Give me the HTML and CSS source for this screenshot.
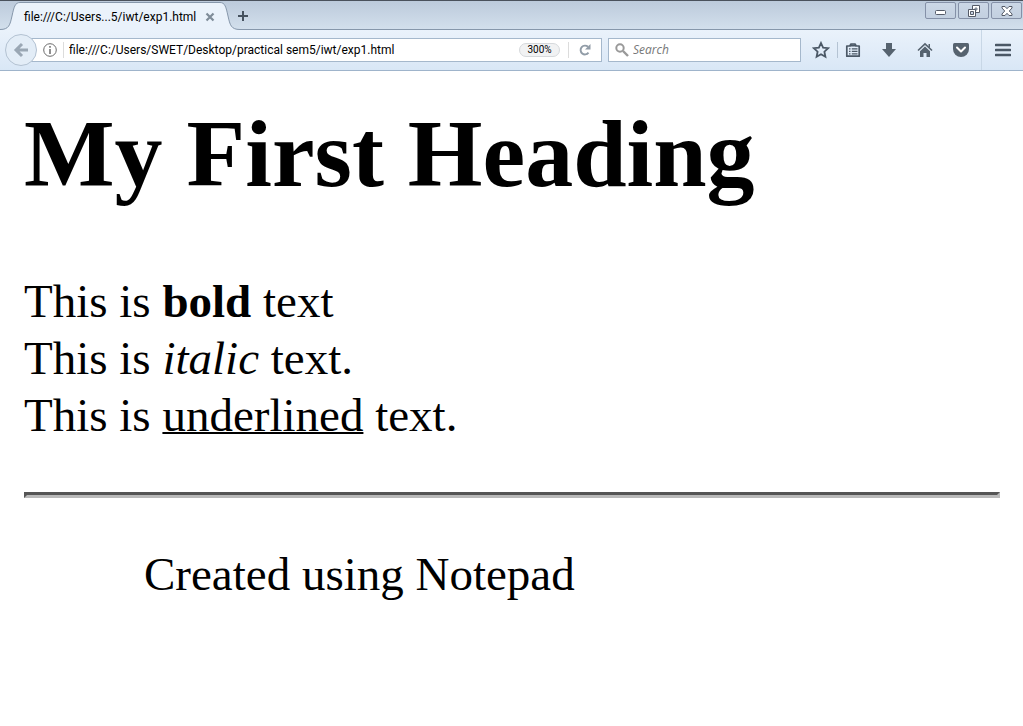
FILE: index.html
```html
<!DOCTYPE html>
<html lang="en">
<head>
<meta charset="utf-8">
<title>exp1.html</title>
<link rel="stylesheet" href="styles.css">
</head>
<body>
<header class="browser">
  <div class="tabbar">
    <div class="tab">
      <svg class="cap" width="20" height="28" viewBox="0 0 20 28"><path d="M0 28C9 28 10 23 12 14S15 .5 20 .5V28Z" fill="#eaf2fb"/><path d="M0 27.5C9 27.5 10 23 12 14S15 .5 20 .5" fill="none" stroke="#8697ab"/></svg>
      <div class="tab-body">
        <button class="tab-title" type="button">file:///C:/Users...5/iwt/exp1.html</button>
        <button class="tab-close" type="button" aria-label="Close tab"><svg width="10" height="10" viewBox="0 0 10 10"><path d="M1.5 1.5l7 7M8.5 1.5l-7 7" stroke="#7f8c99" stroke-width="2.2"/></svg></button>
      </div>
      <svg class="cap" width="20" height="28" viewBox="0 0 20 28"><path d="M20 28C11 28 10 23 8 14S5 .5 0 .5V28Z" fill="#eaf2fb"/><path d="M20 27.5C11 27.5 10 23 8 14S5 .5 0 .5" fill="none" stroke="#8697ab"/></svg>
    </div>
    <div class="tab-rest">
      <button class="new-tab" type="button" aria-label="New tab"><svg width="12" height="12" viewBox="0 0 12 12"><path d="M6 1v10M1 6h10" stroke="#46525f" stroke-width="2"/></svg></button>
      <div class="window-controls">
        <button type="button" aria-label="Minimize"><svg width="14" height="12" viewBox="0 0 14 12"><rect x="1.500" y="5.500" width="10" height="4" rx="1" fill="#fff" stroke="#555b68"/></svg></button>
        <button type="button" aria-label="Restore"><svg width="14" height="12" viewBox="0 0 14 12"><path d="M5.500 .5h7v7h-7z" fill="#fff" stroke="#555b68"/><path d="M8 3h2v2H8z" fill="#c8d3e3" stroke="#555b68" stroke-width=".7"/><path d="M1.500 4.500h7v7h-7z" fill="#fff" stroke="#555b68"/><path d="M3.500 6.500h3v3h-3z" fill="#c8d3e3" stroke="#555b68"/></svg></button>
        <button type="button" aria-label="Close"><svg width="14" height="12" viewBox="0 0 14 12"><path d="M2 1.500h3l2 2.200 2-2.200h3v1.500L9.300 6 12 9v1.500H9L7 8.300 5 10.500H2V9l2.700-3L2 3z" fill="#fff" stroke="#555b68"/></svg></button>
      </div>
    </div>
  </div>
  <nav class="toolbar">
    <button class="back" type="button" aria-label="Back"><svg width="16" height="16" viewBox="0 0 16 16"><path d="M9 2L3 8l6 6M3.500 8H15" fill="none" stroke="#9aa7b4" stroke-width="3"/></svg></button>
    <div class="urlbar">
      <button class="plain info" type="button" aria-label="Site information"><svg width="14" height="14" viewBox="0 0 14 14"><circle cx="7" cy="7" r="6.300" fill="none" stroke="#6b6b6b"/><path d="M7 6v5M7 3v1.700" stroke="#6b6b6b" stroke-width="1.500"/></svg></button>
      <input class="url" type="text" aria-label="Address" value="file:///C:/Users/SWET/Desktop/practical sem5/iwt/exp1.html">
      <button class="zoom" type="button">300%</button>
      <button class="plain reload" type="button" aria-label="Reload"><svg width="12" height="12" viewBox="0 0 12 12"><path d="M9.500 8.700A4.400 4.400 0 1 1 9 2.800" fill="none" stroke="#919ca7" stroke-width="1.900"/><path d="M11.500 0v5.500H6z" fill="#919ca7"/></svg></button>
    </div>
    <label class="search">
      <svg width="14" height="14" viewBox="0 0 14 14"><circle cx="5" cy="5" r="3.700" fill="none" stroke="#999" stroke-width="2"/><path d="M8 8l5 5" stroke="#999" stroke-width="2.400"/></svg>
      <input type="text" placeholder="Search" aria-label="Search">
    </label>
    <div class="tools">
      <button class="plain tool-star" type="button" aria-label="Bookmark"><svg width="18" height="18" viewBox="0 0 18 18"><path d="M9 2l2.100 4.700 5 .5-3.700 3.500 1 5.100L9 13.200l-4.400 2.600 1-5.100L1.900 7.200l5-.5z" fill="none" stroke="#4b5866" stroke-width="1.800"/></svg></button>
      <button class="plain tool-list" type="button" aria-label="Bookmarks list"><svg width="16" height="16" viewBox="0 0 16 16"><path d="M1.800 4h3L6 2h4l1.200 2h3v10.200H1.800z" fill="none" stroke="#4b5866" stroke-width="1.700" stroke-linejoin="round"/><path d="M5 2.500h6v2H5z" fill="#4b5866"/><path d="M4 6.800h1.500M6.800 6.800h5.700M4 9.300h1.500M6.800 9.300h5.700M4 11.800h1.500M6.800 11.800h5.700" stroke="#4b5866" stroke-width="1.200"/></svg></button>
      <button class="plain" type="button" aria-label="Downloads"><svg width="16" height="16" viewBox="0 0 16 16"><path d="M5 1h6v6h4l-7 8-7-8h4z" fill="#56636f"/></svg></button>
      <button class="plain" type="button" aria-label="Home"><svg width="16" height="16" viewBox="0 0 16 16"><path d="M1 8.500L8 1.800l7 6.700" fill="none" stroke="#56636f" stroke-width="1.600"/><path d="M8 4.500l5 4.700V15H9.500v-4h-3v4H3V9.200zM11.500 2H13v4l-1.500-1.500z" fill="#56636f"/></svg></button>
      <button class="plain" type="button" aria-label="Pocket"><svg width="18" height="16" viewBox="0 0 18 16"><path d="M2.500 1h13Q17 1 17 2.500V7a8 8 0 0 1-16 0V2.500Q1 1 2.500 1z" fill="#56636f"/><path d="M5 5.500l4 4 4-4" fill="none" stroke="#fff" stroke-width="2" stroke-linecap="round" stroke-linejoin="round"/></svg></button>
      <button class="plain tool-menu" type="button" aria-label="Menu"><svg width="16" height="14" viewBox="0 0 16 14"><path d="M1 2h14M1 7h14M1 12h14" stroke="#4b5866" stroke-width="2.600" stroke-linecap="round"/></svg></button>
    </div>
  </nav>
</header>
<main class="document">
  <h1>My First Heading</h1>
  <p>This is <b>bold</b> text<br>This is <i>italic</i> text.<br>This is <u>underlined</u> text.</p>
  <hr>
  <blockquote>Created using Notepad</blockquote>
</main>
</body>
</html>
```
FILE: styles.css
```css
* { box-sizing: border-box; }
body {
  margin: 0;
  background: #fff;
  color: #000;
  font-family: "Liberation Serif", "Times New Roman", serif;
}
svg { display: block; flex: none; }
button, input {
  font: 12px/16px Roboto, "Segoe UI", sans-serif;
  color: #000;
  margin: 0;
  padding: 0;
  border: 0;
  background: none;
  min-width: 0;
}

.tabbar {
  display: flex;
  height: 30px;
  padding-top: 1px;
  border-top: 1px solid #4a515c;
  background: linear-gradient(#bccadb, #d3e0ed);
}
.tab { display: flex; }
.tab-body {
  display: flex;
  align-items: center;
  width: 200px;
  height: 28px;
  padding: 0 4px;
  border-top: 1px solid #8697ab;
  background: #eaf2fb;
}
.tab-title { flex: 1; text-align: left; white-space: nowrap; }
.tab-close { padding: 0 1px; }
.tab-rest {
  display: flex;
  flex: 1;
  justify-content: space-between;
  align-items: flex-start;
  border-bottom: 1px solid #8697ab;
}
.new-tab { padding: 8px 0 0; margin-left: -3px; }
.window-controls { display: flex; gap: 2px; padding-right: 1px; }
.window-controls button {
  display: flex;
  align-items: center;
  justify-content: center;
  width: 31px;
  height: 17px;
  border: 1px solid #8591a8;
  border-radius: 2px;
  background: linear-gradient(#cbd7e6, #c3d0e0);
}

.toolbar {
  display: flex;
  align-items: center;
  height: 41px;
  padding-left: 5px;
  border-bottom: 1px solid #9fb4cb;
  background: linear-gradient(#eaf2fb, #d9e7f6);
}
.back {
  display: flex;
  align-items: center;
  justify-content: center;
  flex: none;
  z-index: 1;
  width: 32px;
  height: 32px;
  border: 1px solid #b3c2d2;
  border-radius: 50%;
  background: #e3edf7;
}
.urlbar, .search {
  display: flex;
  align-items: center;
  height: 24px;
  border: 1px solid #a5b8cc;
  background: #fff;
}
.urlbar { flex: 1; margin-left: -6px; padding-left: 11px; }
.plain { display: flex; align-items: center; justify-content: center; flex: none; }
.info { width: 21px; height: 16px; padding-right: 7px; border-right: 1px solid #dcdcdc; }
.url { flex: 1; padding-left: 5px; }
.zoom {
  width: 41px;
  height: 14px;
  margin-right: 8px;
  border: 1px solid #d6d9dc;
  border-radius: 7px;
  background: #f1f2f3;
  font-size: 10px;
  line-height: 12px;
}
.reload { width: 33px; height: 16px; border-left: 1px solid #dcdcdc; }
.search { width: 193px; margin-left: 6px; padding-left: 6px; gap: 4px; }
.search input { flex: 1; font-family: "Open Sans", "Segoe UI", sans-serif; }
.search input::placeholder { color: #777; font-style: italic; opacity: 1; }
.tools { display: flex; align-items: center; height: 40px; padding-left: 4px; }
.tools button { width: 36px; height: 16px; }
.tools .tool-star { width: 33px; border-right: 1px solid #b4c3d3; }
.tools .tool-list { width: 30px; margin-right: 3px; }
.tools .tool-menu { width: 42px; height: 40px; margin-left: 2px; border-left: 1px solid #c8d7e6; }

.document { padding: 28px 23px 0 24px; font-size: 47px; line-height: 57px; }
.document h1 { margin: 0 0 64px; font-size: 96px; line-height: 110px; }
.document p { margin: 0 0 48px; }
.document u { text-decoration-thickness: 2px; }
.document hr {
  margin: 0 0 48px;
  border: 3px solid;
  border-color: #555 #b9b9b9 #b9b9b9 #555;
}
.document blockquote { margin: 0 120px; }
```
